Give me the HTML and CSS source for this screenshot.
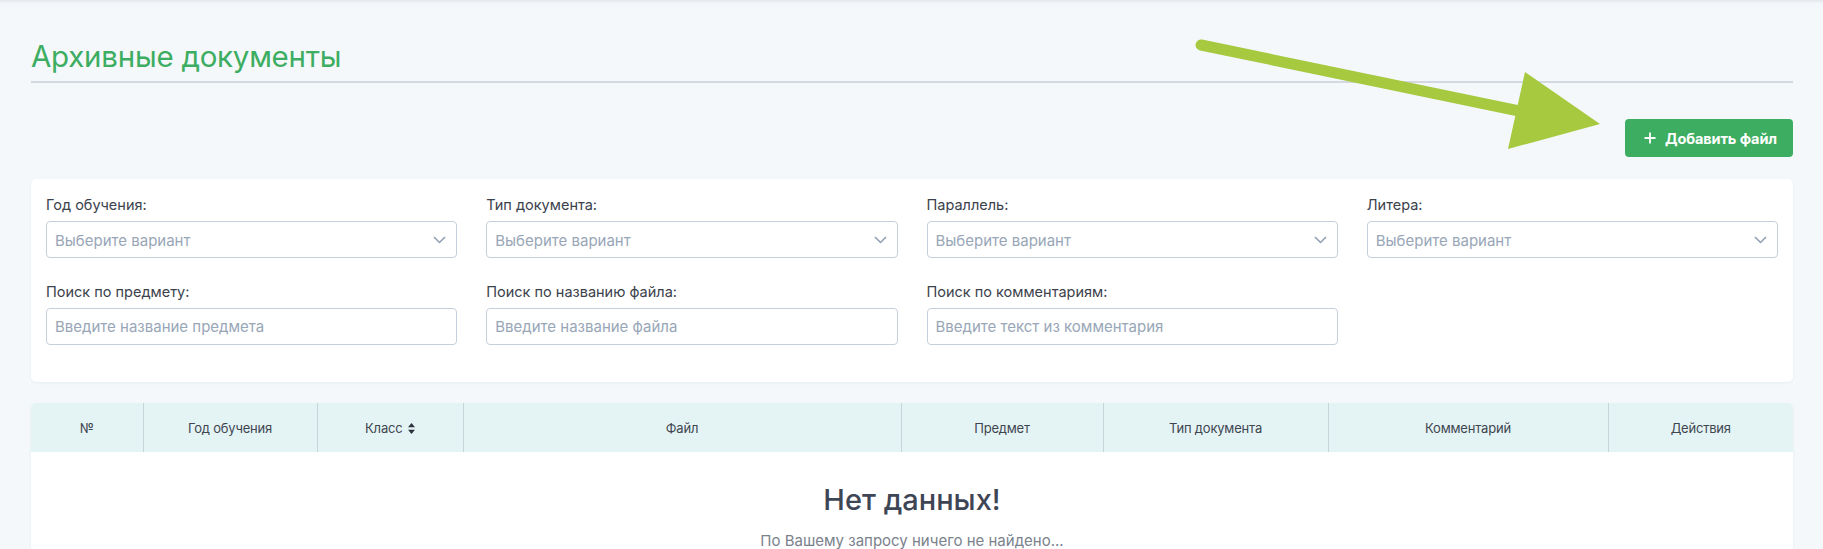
FILE: index.html
```html
<!DOCTYPE html>
<html lang="ru">
<head>
    <meta charset="UTF-8">
    <meta name="viewport" content="width=device-width, initial-scale=1.0">
    <title>Архивные документы</title>
    <link rel="stylesheet" href="styles.css">
</head>
<body>
    <div class="topbar"></div>

    <main class="page">
        <h1 class="page-title">Архивные документы</h1>

        <div class="toolbar">
            <button class="btn-add" type="button">
                <svg class="btn-add__icon" width="12" height="12" viewBox="0 0 12 12">
                    <path d="M6 0.5V11.5M0.5 6H11.5" stroke="#fff" stroke-width="1.8" fill="none"/>
                </svg>
                Добавить файл
            </button>
        </div>

        <!-- Фильтры -->
        <section class="filters">
            <div class="field">
                <label class="field__label">Год обучения:</label>
                <div class="select">
                    <span class="select__placeholder">Выберите вариант</span>
                    <svg class="select__chevron" width="13" height="8" viewBox="0 0 13 8"><path d="M1 1L6.5 6.5L12 1" stroke="#8e9db1" stroke-width="1.5" fill="none"/></svg>
                </div>
            </div>
            <div class="field">
                <label class="field__label">Тип документа:</label>
                <div class="select">
                    <span class="select__placeholder">Выберите вариант</span>
                    <svg class="select__chevron" width="13" height="8" viewBox="0 0 13 8"><path d="M1 1L6.5 6.5L12 1" stroke="#8e9db1" stroke-width="1.5" fill="none"/></svg>
                </div>
            </div>
            <div class="field">
                <label class="field__label">Параллель:</label>
                <div class="select">
                    <span class="select__placeholder">Выберите вариант</span>
                    <svg class="select__chevron" width="13" height="8" viewBox="0 0 13 8"><path d="M1 1L6.5 6.5L12 1" stroke="#8e9db1" stroke-width="1.5" fill="none"/></svg>
                </div>
            </div>
            <div class="field">
                <label class="field__label">Литера:</label>
                <div class="select">
                    <span class="select__placeholder">Выберите вариант</span>
                    <svg class="select__chevron" width="13" height="8" viewBox="0 0 13 8"><path d="M1 1L6.5 6.5L12 1" stroke="#8e9db1" stroke-width="1.5" fill="none"/></svg>
                </div>
            </div>

            <div class="field">
                <label class="field__label">Поиск по предмету:</label>
                <input class="input" type="text" placeholder="Введите название предмета">
            </div>
            <div class="field">
                <label class="field__label">Поиск по названию файла:</label>
                <input class="input" type="text" placeholder="Введите название файла">
            </div>
            <div class="field">
                <label class="field__label">Поиск по комментариям:</label>
                <input class="input" type="text" placeholder="Введите текст из комментария">
            </div>
        </section>

        <!-- Таблица -->
        <section class="table-card">
            <table class="docs-table">
                <colgroup>
                    <col class="col-num">
                    <col class="col-year">
                    <col class="col-class">
                    <col class="col-file">
                    <col class="col-subject">
                    <col class="col-type">
                    <col class="col-comment">
                    <col class="col-actions">
                </colgroup>
                <thead>
                    <tr>
                        <th>№</th>
                        <th>Год обучения</th>
                        <th>Класс
                            <svg class="sort-icon" width="7" height="11" viewBox="0 0 7 11"><path d="M3.5 0L7 4.3H0Z M3.5 11L0 6.7H7Z" fill="#2c333d"/></svg>
                        </th>
                        <th>Файл</th>
                        <th>Предмет</th>
                        <th>Тип документа</th>
                        <th>Комментарий</th>
                        <th>Действия</th>
                    </tr>
                </thead>
                <tbody>
                    <tr>
                        <td colspan="8" class="empty">
                            <div class="empty__title">Нет данных!</div>
                            <div class="empty__text">По Вашему запросу ничего не найдено...</div>
                        </td>
                    </tr>
                </tbody>
            </table>
        </section>
    </main>

    <!-- стрелка-подсказка поверх страницы -->
    <svg class="hint-arrow" width="1823" height="549" viewBox="0 0 1823 549">
        <line x1="1201" y1="45" x2="1524" y2="112" stroke="#a6c93f" stroke-width="11" stroke-linecap="round"/>
        <polygon points="1525,72 1600,124 1508,149" fill="#a6c93f"/>
    </svg>
</body>
</html>
```

FILE: styles.css
```css
:root {
    --bg-page: #f4f8fb;
    --green: #3dad61;
    --text: #3b424c;
    --placeholder: #98a6b7;
    --border-input: #c6d0dc;
    --head-bg: #e4f4f5;
    --head-line: #c5d5d9;
}

* {
    margin: 0;
    padding: 0;
    box-sizing: border-box;
}

body {
    font-family: 'Inter', 'Roboto', sans-serif;
    background: var(--bg-page);
    color: var(--text);
    position: relative;
    min-height: 549px;
    overflow: hidden;
}

.topbar {
    height: 4px;
    background: linear-gradient(#e4e8ec, var(--bg-page));
}

.page {
    padding: 0 30px 0 31px;
}

.page-title {
    margin-top: 34px;
    font-size: 29.5px;
    line-height: 36px;
    font-weight: 400;
    color: var(--green);
    padding-bottom: 7px;
    border-bottom: 2px solid #d4d9e1;
    letter-spacing: -0.25px;
}

.toolbar {
    display: flex;
    justify-content: flex-end;
    margin-top: 36px;
}

.btn-add {
    display: flex;
    align-items: center;
    gap: 9px;
    height: 38px;
    padding: 0 16px 0 19px;
    border: none;
    border-radius: 4px;
    background: var(--green);
    color: #fff;
    font-family: inherit;
    font-size: 14.5px;
    font-weight: 700;
    letter-spacing: -0.1px;
}

/* Фильтры */
.filters {
    margin-top: 22px;
    background: #fff;
    border-radius: 5px;
    box-shadow: 0 1px 3px rgba(40, 60, 90, 0.06);
    padding: 16px 15px 37px 15px;
    display: grid;
    grid-template-columns: repeat(4, 1fr);
    column-gap: 29px;
    row-gap: 24px;
}

.field__label {
    display: block;
    font-size: 14.5px;
    line-height: 20px;
    margin-bottom: 6px;
    color: var(--text);
}

.select,
.input {
    height: 37px;
    width: 100%;
    border: 1px solid var(--border-input);
    border-radius: 4px;
    background: #fff;
    font-family: inherit;
    font-size: 15px;
    padding: 0 8px;
}

.select {
    display: flex;
    align-items: center;
    justify-content: space-between;
}

.select__placeholder {
    color: var(--placeholder);
    padding-top: 1px;
}

.select__chevron {
    margin-right: 2px;
}

.input::placeholder {
    color: var(--placeholder);
}

/* Таблица */
.table-card {
    margin-top: 21px;
    background: #fff;
    border-radius: 5px 5px 0 0;
    box-shadow: 0 1px 3px rgba(40, 60, 90, 0.06);
    overflow: hidden;
}

.docs-table {
    width: 100%;
    table-layout: fixed;
    border-collapse: collapse;
}

.col-num { width: 112px; }
.col-year { width: 174px; }
.col-class { width: 146px; }
.col-file { width: 438px; }
.col-subject { width: 202px; }
.col-type { width: 225px; }
.col-comment { width: 280px; }
.col-actions { width: 185px; }

.docs-table th {
    height: 49px;
    background: var(--head-bg);
    font-size: 13px;
    font-weight: 400;
    color: #3f4650;
    text-align: center;
    border-left: 1px solid var(--head-line);
    letter-spacing: -0.2px;
}

.docs-table th:first-child {
    border-left: none;
}

.sort-icon {
    margin-left: 2px;
    vertical-align: -1px;
}

.empty {
    text-align: center;
    padding-top: 30px;
}

.empty__title {
    font-size: 29px;
    line-height: 36px;
    font-weight: 500;
    color: #3e4655;
}

.empty__text {
    margin-top: 13px;
    font-size: 15px;
    line-height: 20px;
    color: #7a828c;
}

.hint-arrow {
    position: absolute;
    top: 0;
    left: 0;
    pointer-events: none;
}
```
